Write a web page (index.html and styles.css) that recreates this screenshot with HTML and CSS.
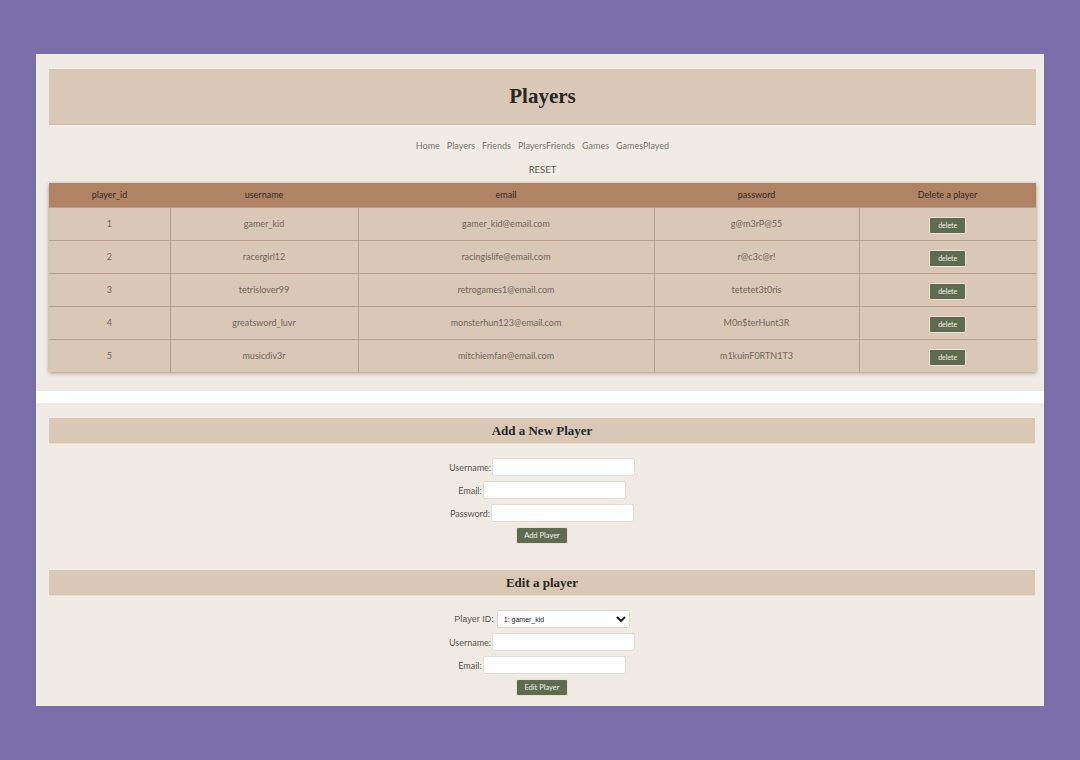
FILE: index.html
```html
<!DOCTYPE html>
<html>
<head>
<meta charset="utf-8">
<title>Players</title>
<link rel="stylesheet" href="styles.css">
</head>
<body>
<div class="frame">
  <section class="top">
    <header class="page-head"><h1>Players</h1></header>
    <nav class="nav">
      <a>Home</a><a>Players</a><a>Friends</a><a>PlayersFriends</a><a>Games</a><a>GamesPlayed</a>
    </nav>
    <div class="reset-row"><button class="reset">RESET</button></div>
    <table class="players">
      <thead>
        <tr><th class="c1">player_id</th><th class="c2">username</th><th class="c3">email</th><th class="c4">password</th><th class="c5">Delete a player</th></tr>
      </thead>
      <tbody>
        <tr><td>1</td><td>gamer_kid</td><td>gamer_kid@email.com</td><td>g@m3rP@55</td><td><button class="btn small">delete</button></td></tr>
        <tr><td>2</td><td>racergirl12</td><td>racingislife@email.com</td><td>r@c3c@r!</td><td><button class="btn small">delete</button></td></tr>
        <tr><td>3</td><td>tetrislover99</td><td>retrogames1@email.com</td><td>tetetet3t0ris</td><td><button class="btn small">delete</button></td></tr>
        <tr><td>4</td><td>greatsword_luvr</td><td>monsterhun123@email.com</td><td>M0n$terHunt3R</td><td><button class="btn small">delete</button></td></tr>
        <tr><td>5</td><td>musicdiv3r</td><td>mitchiemfan@email.com</td><td>m1kuinF0RTN1T3</td><td><button class="btn small">delete</button></td></tr>
      </tbody>
    </table>
  </section>
  <div class="gap"></div>
  <section class="bottom">
    <h2 class="bar">Add a New Player</h2>
    <form class="form">
      <div class="row"><label>Username:</label><input class="field" type="text"></div>
      <div class="row"><label>Email:</label><input class="field" type="text"></div>
      <div class="row"><label>Password:</label><input class="field" type="password"></div>
      <div class="row btn-row"><button type="button" class="btn form-btn">Add Player</button></div>
    </form>
    <h2 class="bar second">Edit a player</h2>
    <form class="form">
      <div class="row"><label class="arial">Player ID:</label><select class="sel"><option>1: gamer_kid</option></select></div>
      <div class="row"><label>Username:</label><input class="field" type="text"></div>
      <div class="row"><label>Email:</label><input class="field" type="text"></div>
      <div class="row btn-row"><button type="button" class="btn form-btn">Edit Player</button></div>
    </form>
  </section>
</div>
</body>
</html>
```
FILE: styles.css
```css
* { box-sizing: border-box; }
html, body { margin: 0; padding: 0; }
body {
  background: #7a6ea8;
  padding: 54px 36px;
  font-family: "Lato", "Noto Sans", sans-serif;
  height: 760px;
}
.frame {
  width: 1008px;
  height: 652px;
  background: #f0ece5;
  display: flex;
  flex-direction: column;
}
.top {
  height: 337px;
  padding: 15px 8px 0 13px;
}
.page-head {
  height: 56px;
  background: #d9c8b6;
  border-bottom: 1px solid #cdbba8;
  display: flex;
  align-items: center;
  justify-content: center;
}
.page-head h1 {
  margin: 0;
  font-family: "Liberation Serif", "DejaVu Serif", serif;
  font-weight: bold;
  font-size: 21px;
  color: #26281f;
}
.nav {
  margin-top: 10px;
  height: 20px;
  display: flex;
  justify-content: center;
  align-items: center;
  gap: 7px;
  font-size: 9px;
}
.nav a { color: #7a7670; }
.reset-row {
  height: 18px;
  margin-top: 5px;
  display: flex;
  justify-content: center;
  align-items: center;
}
.reset {
  border: none;
  background: none;
  padding: 0;
  font-family: "Lato", sans-serif;
  font-size: 9.5px;
  color: #5e5a4e;
}
.players {
  margin-top: 5px;
  width: 987px;
  border-collapse: collapse;
  background: #d9c8b6;
  box-shadow: 0 1px 4px rgba(60, 40, 20, 0.45);
  font-size: 9px;
  table-layout: fixed;
}
.players th {
  background: #b08364;
  color: #35291f;
  font-weight: normal;
  height: 24px;
  padding: 0;
  text-align: center;
}
.c1 { width: 121px; }
.c2 { width: 188px; }
.c3 { width: 296px; }
.c4 { width: 205px; }
.c5 { width: 177px; }
.players td {
  height: 33px;
  padding: 0;
  text-align: center;
  color: #6e665d;
  border-top: 1px solid #b89f8a;
  border-left: 1px solid #b89f8a;
}
.players td:first-child { border-left: none; }
.btn {
  background: #5f6b4e;
  color: #f3f0ea;
  border: 1px solid #e9e2d4;
  border-radius: 2px;
  font-family: "Lato", sans-serif;
  cursor: pointer;
}
.btn.small {
  width: 37px;
  height: 17px;
  font-size: 7px;
  padding: 0;
  margin-top: 3px;
}
.gap { height: 12px; background: #ffffff; }
.bottom {
  flex: 1;
  padding: 15px 9px 0 13px;
}
.bar {
  margin: 0;
  height: 26px;
  background: #d9c8b6;
  border-bottom: 1px solid #e8ddd0;
  display: flex;
  align-items: center;
  justify-content: center;
  font-family: "Liberation Serif", "DejaVu Serif", serif;
  font-weight: bold;
  font-size: 13px;
  color: #26281f;
}
.bar.second { margin-top: 26px; }
.form {
  margin-top: 14px;
  display: flex;
  flex-direction: column;
  align-items: center;
  gap: 5px;
}
.row {
  display: flex;
  align-items: center;
  height: 18px;
  font-size: 9px;
  color: #5a5650;
}
.row label { margin-right: 1px; }
.row label.arial { font-family: "Liberation Sans", Arial, sans-serif; margin-right: 3px; }
.field {
  width: 143px;
  height: 18px;
  border: 1px solid #e2ddd6;
  border-radius: 2px;
  background: #fff;
  padding: 0 3px;
}
.sel {
  width: 133px;
  height: 18px;
  border: 1px solid #dcd7d0;
  border-radius: 2px;
  background: #fff;
  font-family: "Liberation Sans", Arial, sans-serif;
  font-size: 7px;
  color: #222;
  padding: 0 2px;
}
.btn-row { height: 17px; }
.form-btn {
  width: 52px;
  height: 17px;
  font-size: 7.5px;
  padding: 0;
}
```
